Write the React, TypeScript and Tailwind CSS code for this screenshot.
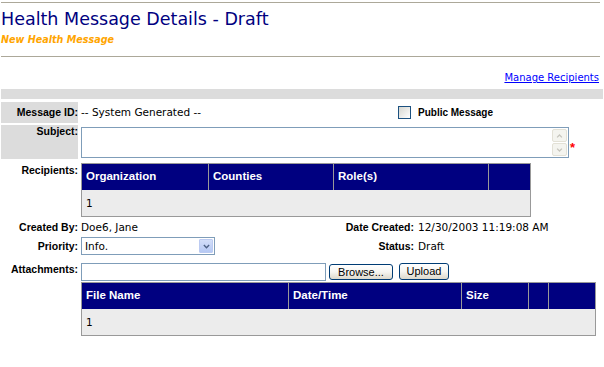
import React from 'react';

const reg = "font-['DejaVu_Sans',sans-serif] text-[10.5px] leading-[13px] text-black";
const lab = "font-['Liberation_Sans',Arial,sans-serif] font-bold text-[10.5px] leading-[13px] text-black";
const hdr = "font-['Liberation_Sans',Arial,sans-serif] font-bold text-[11.5px] text-white flex items-center pl-[4px]";
const btn = "font-['Liberation_Sans',Arial,sans-serif] text-[11px] text-black rounded-[3px] border border-[#003c74] bg-linear-to-b from-white via-[#f6f5f0] to-[#dcd8cb] flex items-center justify-center";

const Chevron: React.FC<{ up?: boolean; color: string; className?: string }> = ({ up, color, className }) => (
  <svg className={className} viewBox="0 0 8 5" fill="none" stroke={color} strokeWidth={1.6}>
    <path d={up ? 'M1 4.2L4 1.2L7 4.2' : 'M1 0.8L4 3.8L7 0.8'} />
  </svg>
);

const ScrollBtn: React.FC<{ up?: boolean }> = ({ up }) => (
  <div className="w-[15px] h-[13px] rounded-[2px] border border-[#e3e1d6] bg-[#f4f4ef] flex items-center justify-center">
    <Chevron up={up} color="#c6c5bd" className="w-[7px] h-[4px]" />
  </div>
);

const App: React.FC = () => {
  return (
    <div className="w-[604px] h-[367px] bg-white pl-[1px] pt-[2px] overflow-hidden">
      <div className="h-px w-[599px] bg-[#aca899]" />
      <h1 className="mt-[6px] font-['DejaVu_Sans',sans-serif] text-[17.5px] leading-[21px] font-normal text-[#000080]">
        Health Message Details - Draft
      </h1>
      <div className="mt-[4px] font-['DejaVu_Sans',sans-serif] text-[9.6px] leading-[12px] font-bold italic text-[#ffa500]">
        New Health Message
      </div>
      <div className="mt-[10px] h-px w-[599px] bg-[#aca899]" />

      <div className="mt-[15px] pr-[5px] text-right font-['DejaVu_Sans',sans-serif] text-[10px] leading-[12px]">
        <a href="#" className="text-[#0000ff] underline">Manage Recipients</a>
      </div>

      <div className="mt-[5px] h-[10px] w-[602px] bg-[#dcdcdc]" />

      {/* Message ID */}
      <div className="mt-[3px] flex h-[21px]">
        <div className={`w-[77px] bg-[#dcdcdc] flex items-center justify-end ${lab}`}>Message ID:</div>
        <div className={`ml-[3px] w-[215px] flex items-center ${reg}`}>-- System Generated --</div>
        <div className="w-[119px] flex items-center justify-end pr-[4px]">
          <div className="w-[13px] h-[13px] border border-[#1c5180] bg-linear-to-br from-[#d6d6d0] to-white" />
        </div>
        <div className={`ml-[3px] flex items-center font-['Liberation_Sans',Arial,sans-serif] font-bold text-[10px] text-black`}>
          Public Message
        </div>
      </div>

      {/* Subject */}
      <div className="mt-[2px] flex h-[34px]">
        <div className={`w-[77px] bg-[#dcdcdc] text-right ${lab}`}>Subject:</div>
        <div className="ml-[3px] flex items-start">
          <div className="mt-[2px] w-[488px] h-[31px] border border-[#7f9db9] bg-white flex">
            <div className="flex-1" />
            <div className="mr-[1px] mt-[1px] flex flex-col gap-[1px]">
              <ScrollBtn up />
              <ScrollBtn />
            </div>
          </div>
          <span className="ml-[1px] mt-[16px] font-['Liberation_Sans',Arial,sans-serif] font-bold text-[13px] leading-[13px] text-[#ff0000]">*</span>
        </div>
      </div>

      {/* Recipients */}
      <div className="mt-[2px] flex">
        <div className={`w-[77px] pt-[3px] text-right ${lab}`}>Recipients:</div>
        <div className="ml-[3px] mt-[2px] w-[450px] border border-[#999999]">
          <div className="flex h-[26px] bg-[#000080]">
            <div className={`w-[126px] ${hdr}`}>Organization</div>
            <div className={`w-[125px] border-l border-[#999999] ${hdr}`}>Counties</div>
            <div className={`w-[155px] border-l border-[#999999] ${hdr}`}>Role(s)</div>
            <div className="w-[42px] border-l border-[#999999]" />
          </div>
          <div className={`h-[26px] bg-[#ececec] flex items-center pl-[4px] ${reg}`}>1</div>
        </div>
      </div>

      {/* Created By */}
      <div className="mt-[2px] flex h-[17px] items-center">
        <div className={`w-[77px] text-right ${lab}`}>Created By:</div>
        <div className={`ml-[3px] w-[215px] ${reg}`}>Doe6, Jane</div>
        <div className={`w-[119px] pr-[1px] text-right ${lab}`}>Date Created:</div>
        <div className={`ml-[3px] ${reg}`}>12/30/2003 11:19:08 AM</div>
      </div>

      {/* Priority */}
      <div className="mt-[1px] flex h-[18px] items-center">
        <div className={`w-[77px] text-right ${lab}`}>Priority:</div>
        <div className="ml-[3px] w-[215px]">
          <div className="w-[134px] h-[18px] border border-[#7f9db9] bg-white flex items-center">
            <div className={`flex-1 pl-[3px] ${reg}`}>Info.</div>
            <div className="mr-[1px] w-[14px] h-[14px] rounded-[1px] border border-[#bccbf2] bg-linear-to-b from-[#d3def9] to-[#b6c9f4] flex items-center justify-center">
              <Chevron color="#4d6185" className="w-[7px] h-[5px]" />
            </div>
          </div>
        </div>
        <div className={`w-[119px] pr-[1px] text-right ${lab}`}>Status:</div>
        <div className={`ml-[3px] ${reg}`}>Draft</div>
      </div>

      {/* Attachments */}
      <div className="mt-[8px] flex">
        <div className={`w-[77px] text-right ${lab}`}>Attachments:</div>
        <div className="ml-[3px] flex flex-col">
          <div className="flex items-start h-[19px]">
            <div className="w-[245px] h-[18px] border border-[#7f9db9] bg-white" />
            <div className={`ml-[3px] mt-[1px] w-[64px] h-[16px] ${btn}`}>Browse...</div>
            <div className={`ml-[6px] w-[50px] h-[17px] ${btn}`}>Upload</div>
          </div>
          <div className="w-[515px] border border-[#999999]">
            <div className="flex h-[26px] bg-[#000080]">
              <div className={`w-[206px] ${hdr}`}>File Name</div>
              <div className={`w-[173px] border-l border-[#999999] ${hdr}`}>Date/Time</div>
              <div className={`w-[67px] border-l border-[#999999] ${hdr}`}>Size</div>
              <div className="w-[20px] border-l border-[#999999]" />
              <div className="w-[47px] border-l border-[#999999]" />
            </div>
            <div className={`h-[26px] bg-[#ececec] flex items-center pl-[4px] ${reg}`}>1</div>
          </div>
        </div>
      </div>
    </div>
  );
};

export default App;
